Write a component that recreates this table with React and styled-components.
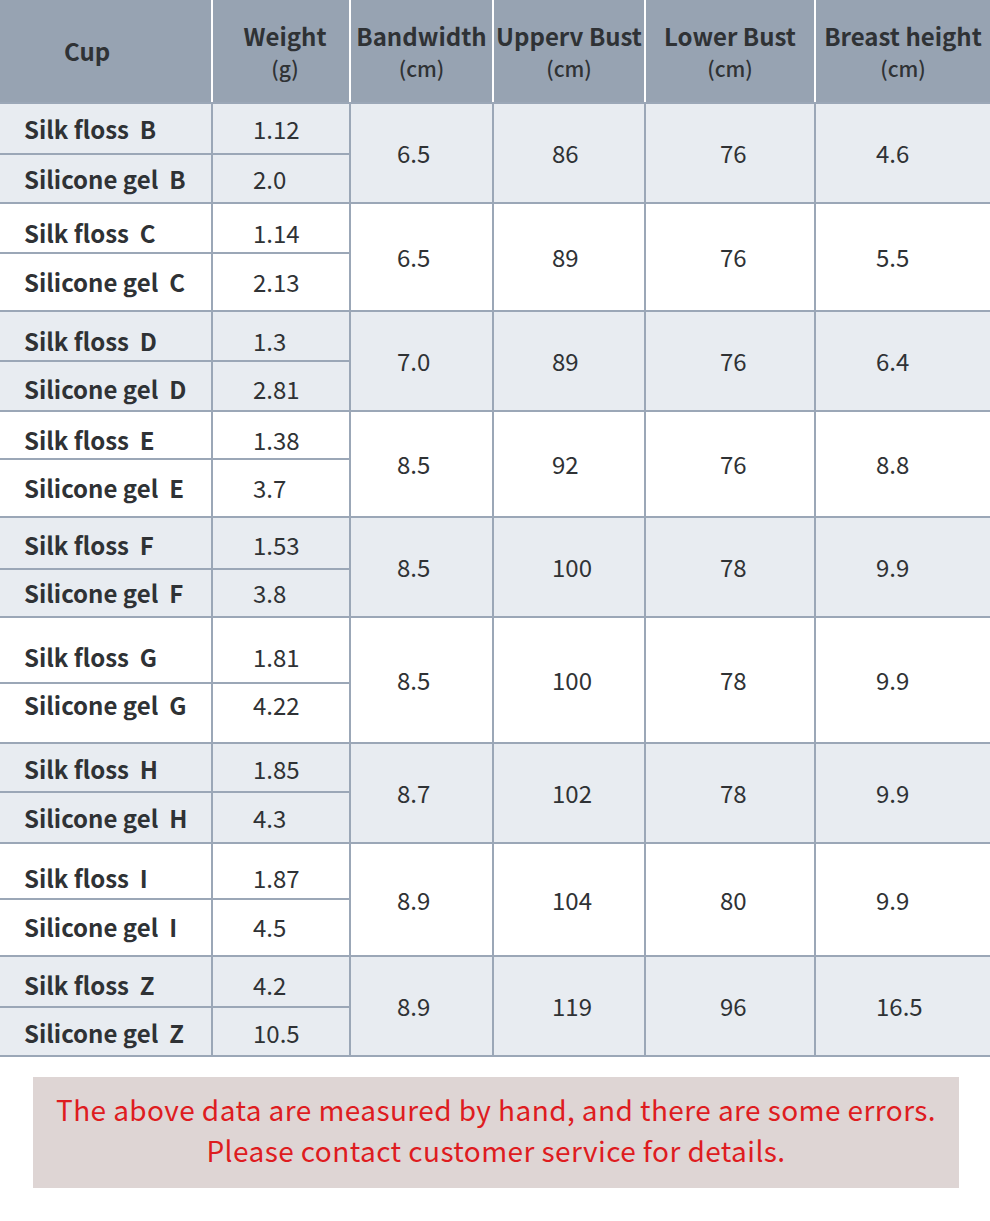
import React from 'react';
import styled, { createGlobalStyle } from 'styled-components';

const GlobalStyle = createGlobalStyle`
  body {
    margin: 0;
    background: #ffffff;
    font-family: 'Noto Sans CJK SC', 'Noto Sans', sans-serif;
    color: #333333;
  }
`;

// 尺码数据: rows = 两行高度, nudge = 文字上下微调
const groups = [
  { cup: 'B', weight: ['1.12', '2.0'], band: '6.5', upper: '86', lower: '76', height: '4.6', shaded: true, rows: [51, 49], nudge: [0, 0] },
  { cup: 'C', weight: ['1.14', '2.13'], band: '6.5', upper: '89', lower: '76', height: '5.5', shaded: false, rows: [50, 58], nudge: [5, 0] },
  { cup: 'D', weight: ['1.3', '2.81'], band: '7.0', upper: '89', lower: '76', height: '6.4', shaded: true, rows: [50, 50], nudge: [5, 3] },
  { cup: 'E', weight: ['1.38', '3.7'], band: '8.5', upper: '92', lower: '76', height: '8.8', shaded: false, rows: [48, 58], nudge: [5, 0] },
  { cup: 'F', weight: ['1.53', '3.8'], band: '8.5', upper: '100', lower: '78', height: '9.9', shaded: true, rows: [52, 48], nudge: [2, 0] },
  { cup: 'G', weight: ['1.81', '4.22'], band: '8.5', upper: '100', lower: '78', height: '9.9', shaded: false, rows: [66, 60], nudge: [7, -8] },
  { cup: 'H', weight: ['1.85', '4.3'], band: '8.7', upper: '102', lower: '78', height: '9.9', shaded: true, rows: [49, 51], nudge: [1, 0] },
  { cup: 'I', weight: ['1.87', '4.5'], band: '8.9', upper: '104', lower: '80', height: '9.9', shaded: false, rows: [56, 57], nudge: [7, -1] },
  { cup: 'Z', weight: ['4.2', '10.5'], band: '8.9', upper: '119', lower: '96', height: '16.5', shaded: true, rows: [51, 49], nudge: [3, 1] }
];

const headers = [
  { title: 'Weight', unit: '(g)', pad: 8 },
  { title: 'Bandwidth', unit: '(cm)', pad: 0 },
  { title: 'Upperv Bust', unit: '(cm)', pad: 0 },
  { title: 'Lower Bust', unit: '(cm)', pad: 0 },
  { title: 'Breast height', unit: '(cm)', pad: 0 }
];

const line = '#9ba7b7';

function App() {
  return (
    <>
      <GlobalStyle />
      <Page>
        <SizeTable>
          <colgroup>
            <col style={{ width: 212 }} />
            <col style={{ width: 138 }} />
            <col style={{ width: 143 }} />
            <col style={{ width: 152 }} />
            <col style={{ width: 170 }} />
            <col style={{ width: 175 }} />
          </colgroup>
          <thead>
            <HeadRow>
              <HeadCell $align="left">
                <HeadTitle $indent={64}>Cup</HeadTitle>
              </HeadCell>
              {headers.map((h, i) => (
                <HeadCell key={h.title} $last={i === headers.length - 1}>
                  <HeadTitle $indent={h.pad}>{h.title}</HeadTitle>
                  <HeadUnit $indent={h.pad}>{h.unit}</HeadUnit>
                </HeadCell>
              ))}
            </HeadRow>
          </thead>
          <tbody>
            {groups.map((g) => (
              <React.Fragment key={g.cup}>
                <BodyRow $shaded={g.shaded} style={{ height: g.rows[0] }}>
                  <LabelCell $nudge={g.nudge[0]}>Silk floss&nbsp;&nbsp;{g.cup}</LabelCell>
                  <ValueCell $pad={40} $nudge={g.nudge[0]}>{g.weight[0]}</ValueCell>
                  <ValueCell rowSpan={2} $pad={46}>{g.band}</ValueCell>
                  <ValueCell rowSpan={2} $pad={58}>{g.upper}</ValueCell>
                  <ValueCell rowSpan={2} $pad={74}>{g.lower}</ValueCell>
                  <ValueCell rowSpan={2} $pad={60} $last>{g.height}</ValueCell>
                </BodyRow>
                <BodyRow $shaded={g.shaded} style={{ height: g.rows[1] }}>
                  <LabelCell $nudge={g.nudge[1]}>Silicone gel&nbsp;&nbsp;{g.cup}</LabelCell>
                  <ValueCell $pad={40} $nudge={g.nudge[1]}>{g.weight[1]}</ValueCell>
                </BodyRow>
              </React.Fragment>
            ))}
          </tbody>
        </SizeTable>
        <Notice>
          <NoticeLine>The above data are measured by hand, and there are some errors.</NoticeLine>
          <NoticeLine>Please contact customer service for details.</NoticeLine>
        </Notice>
      </Page>
    </>
  );
}

export default App;

const Page = styled.div`
  width: 990px;
  height: 1221px;
  background: #ffffff;
  overflow: hidden;
`;

const SizeTable = styled.table`
  width: 990px;
  table-layout: fixed;
  border-collapse: collapse;
  border-spacing: 0;
`;

//헤더
const HeadRow = styled.tr`
  height: 103px;
  background: #97a3b2;
`;

const HeadCell = styled.th`
  padding: 0;
  text-align: ${(p) => p.$align || 'center'};
  vertical-align: middle;
  color: #2f3235;
  border-right: ${(p) => (p.$last ? 'none' : '2px solid #ffffff')};
  border-bottom: 2px solid ${line};
`;

const HeadTitle = styled.div`
  font-size: 24px;
  font-weight: 700;
  line-height: 34px;
  white-space: nowrap;
  padding-left: ${(p) => p.$indent || 0}px;
`;

const HeadUnit = styled.div`
  font-size: 21px;
  font-weight: 500;
  line-height: 30px;
  padding-left: ${(p) => p.$indent || 0}px;
`;

const BodyRow = styled.tr`
  background: ${(p) => (p.$shaded ? '#e8ecf1' : '#ffffff')};
`;

const nudgePad = (p) =>
  `padding-top: ${Math.max(0, (p.$nudge || 0) * 2)}px; padding-bottom: ${Math.max(0, -(p.$nudge || 0) * 2)}px;`;

const LabelCell = styled.td`
  padding-left: 24px;
  padding-right: 0;
  ${nudgePad}
  font-size: 24px;
  font-weight: 700;
  line-height: 30px;
  color: #2f3235;
  white-space: nowrap;
  vertical-align: middle;
  border: 2px solid ${line};
  border-left: none;
`;

const ValueCell = styled.td`
  padding-left: ${(p) => p.$pad}px;
  padding-right: 0;
  ${nudgePad}
  font-size: 24px;
  font-weight: 400;
  line-height: 30px;
  color: #2f3235;
  vertical-align: middle;
  white-space: nowrap;
  border: 2px solid ${line};
  border-right: ${(p) => (p.$last ? 'none' : `2px solid ${line}`)};
`;

//안내 문구
const Notice = styled.div`
  margin: 20px 31px 0 33px;
  height: 111px;
  box-sizing: border-box;
  padding-bottom: 6px;
  background: #ded5d4;
  display: flex;
  flex-direction: column;
  justify-content: center;
  align-items: center;
`;

const NoticeLine = styled.p`
  margin: 0;
  font-size: 28px;
  line-height: 41px;
  letter-spacing: 0.42px;
  color: #de1c1f;
  white-space: nowrap;
`;
